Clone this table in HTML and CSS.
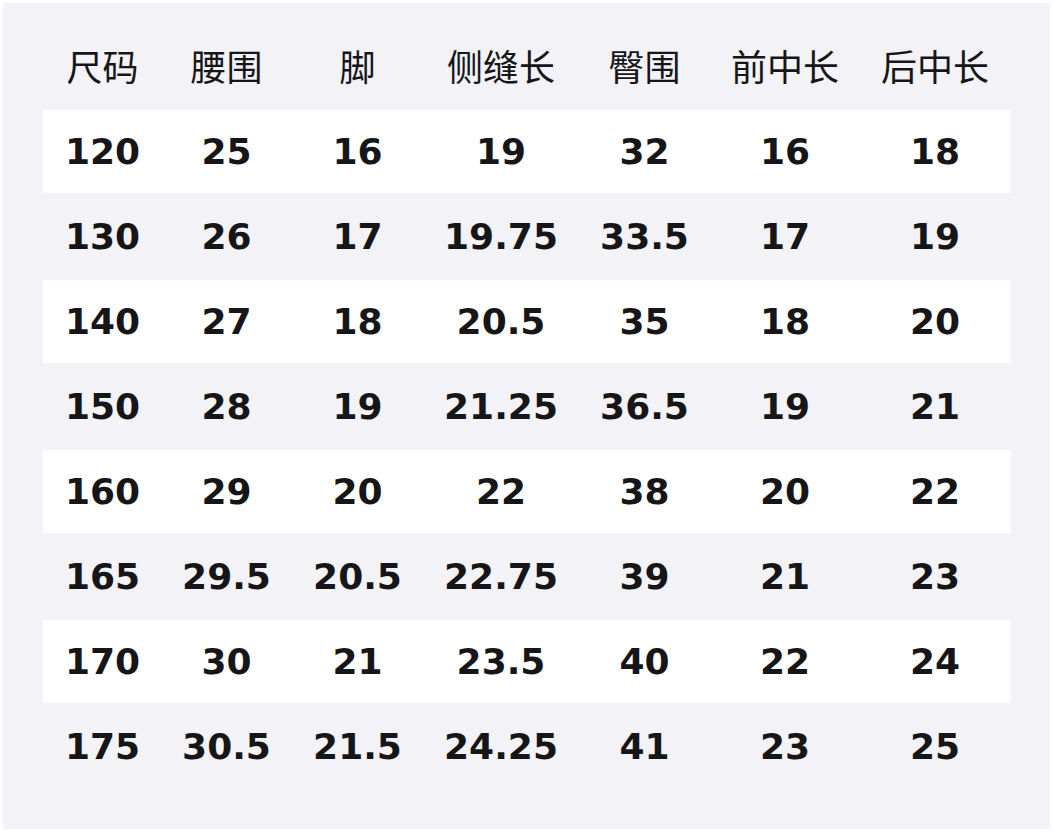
FILE: index.html
```html
<!DOCTYPE html>
<html lang="zh">
<head>
<meta charset="utf-8">
<link rel="stylesheet" href="styles.css">
</head>
<body>
<div class="sheet">
  <div class="table">
    <div class="row head"><div>尺码</div><div>腰围</div><div>脚</div><div>侧缝长</div><div>臀围</div><div>前中长</div><div>后中长</div></div>
    <div class="row odd"><div>120</div><div>25</div><div>16</div><div>19</div><div>32</div><div>16</div><div>18</div></div>
    <div class="row"><div>130</div><div>26</div><div>17</div><div>19.75</div><div>33.5</div><div>17</div><div>19</div></div>
    <div class="row odd"><div>140</div><div>27</div><div>18</div><div>20.5</div><div>35</div><div>18</div><div>20</div></div>
    <div class="row"><div>150</div><div>28</div><div>19</div><div>21.25</div><div>36.5</div><div>19</div><div>21</div></div>
    <div class="row odd"><div>160</div><div>29</div><div>20</div><div>22</div><div>38</div><div>20</div><div>22</div></div>
    <div class="row"><div>165</div><div>29.5</div><div>20.5</div><div>22.75</div><div>39</div><div>21</div><div>23</div></div>
    <div class="row odd"><div>170</div><div>30</div><div>21</div><div>23.5</div><div>40</div><div>22</div><div>24</div></div>
    <div class="row"><div>175</div><div>30.5</div><div>21.5</div><div>24.25</div><div>41</div><div>23</div><div>25</div></div>
  </div>
</div>
</body>
</html>
```
FILE: styles.css
```css
html, body {
  margin: 0;
  padding: 0;
  background: #ffffff;
}
body {
  padding: 3px 4px 4px 3px;
  width: 1054px;
  height: 833px;
  box-sizing: border-box;
}
.sheet {
  background: #f2f2f7;
  width: 1047px;
  height: 826px;
  box-sizing: border-box;
  padding: 22px 0 0 40px;
}
.table {
  width: 968px;
  display: flex;
  flex-direction: column;
  gap: 2px;
}
.row {
  display: grid;
  grid-template-columns: 119px 129px 133px 154px 133px 148px 152px;
  height: 83px;
  align-items: center;
  text-align: center;
  font-family: "DejaVu Sans", sans-serif;
  font-weight: bold;
  font-size: 36px;
  color: #161618;
  white-space: nowrap;
}
.row.odd {
  background: #ffffff;
}
.row.head {
  height: 83px;
  box-sizing: border-box;
  padding-bottom: 4px;
  font-family: "Noto Sans CJK SC", sans-serif;
  font-weight: 400;
  font-size: 36px;
}
```
